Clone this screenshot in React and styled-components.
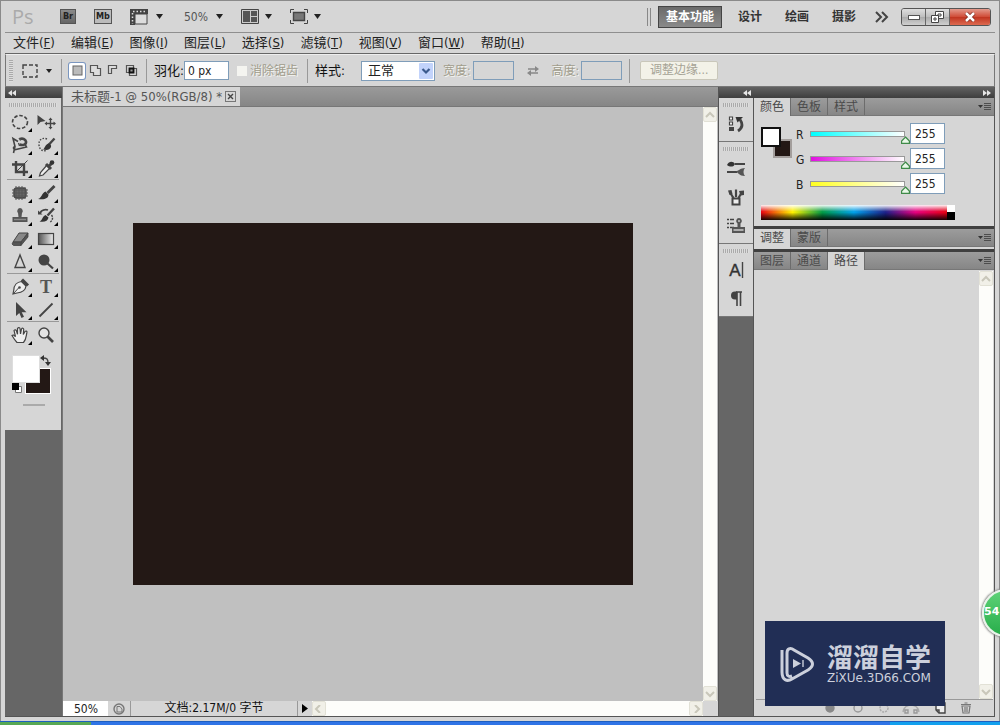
import React, { useState } from 'react';
import styled, { createGlobalStyle, css } from 'styled-components';

const GlobalStyle = createGlobalStyle`
  * {
    box-sizing: border-box;
  }
  body {
    margin: 0;
    overflow: hidden;
    font-family: "DejaVu Sans Condensed", "Open Sans", "Noto Sans CJK SC", sans-serif;
    font-size: 12px;
    color: #222;
  }
  button, input, select {
    font: inherit;
    color: inherit;
    margin: 0;
    padding: 0;
  }
  button {
    border: 0;
    background: none;
  }
`
const Desktop = styled.div`
  position: relative;
  display: flex;
  flex-direction: column;
  height: 100vh;
  overflow: hidden;
  background: #d6d6d6;
`
const Frame = styled.div`
  display: flex;
  flex-direction: column;
  flex: 1;
  min-height: 0;
  padding: 0 4px 4px;
  border: 1px solid #8a8a8a;
  border-bottom: 0;
`
const Taskbar = styled.div`
  height: 4px;
  background: linear-gradient(90deg, #57a854 0 91px, #2f74e6 91px 89%, #12a0ee 89%);
  border-top: 1px solid #1e5fc0;
`

/* top bars */
const AppBar = styled.header`
  display: flex;
  align-items: center;
  height: 32px;
  padding: 0 4px 0 7px;
  border-bottom: 1px solid #8f8f8f;
`
const AppTools = styled.div`
  display: flex;
  align-items: center;
  gap: 18px;
  flex: 1;
`
const Logo = styled.span`
  width: 30px;
  font-family: "Open Sans", sans-serif;
  font-size: 20px;
  line-height: 24px;
  color: #aaa;
`
const Tile = styled.button`
  width: ${props => props.$folder ? '18px' : '16px'};
  height: 15px;
  border: 1px solid #555;
  background: ${props => props.$folder ? '#bbb' : 'linear-gradient(#8a8a8a, #666)'};
  font-size: 9px;
  font-weight: bold;
  line-height: 13px;
  text-align: center;
  color: #222;
`
const DropButton = styled.button`
  display: flex;
  align-items: center;
  gap: ${props => props.$wide ? '8px' : '6px'};
  min-width: ${props => props.$pad ? '36px' : '0'};
  color: #555;
  svg { display: block; }
`
const Workspaces = styled.nav`
  display: flex;
  align-items: center;
  gap: 23px;
`
const DoubleLine = styled.span`
  width: 4px;
  height: 18px;
  margin-right: -16px;
  border: 1px solid #888;
  border-width: 0 1px;
`
const Workspace = styled.button`
  height: 22px;
  margin-left: ${props => props.$more ? '-4px' : '0'};
  font-weight: bold;
  line-height: 20px;
  color: #333;
  svg { display: block; }
  ${props => props.$active && css`
    padding: 0 7px;
    margin-right: -7px;
    border: 1px solid #444;
    background: linear-gradient(#6a6a6a, #8a8a8a);
    color: #fff;
  `}
`
const WindowButtons = styled.div`
  display: flex;
  height: 18px;
  margin-left: 12px;
  border: 1px solid #555;
  border-radius: 3px;
  overflow: hidden;
`
const WindowButton = styled.button`
  display: flex;
  align-items: center;
  justify-content: center;
  width: ${props => props.$close ? '40px' : '24px'};
  border-right: ${props => props.$close ? '0' : '1px solid #666'};
  background: ${props => props.$close
    ? 'linear-gradient(#e39a8c, #cf4a35 50%, #c03520 51%, #dd6a50)'
    : 'linear-gradient(#dedede, #bdbdbd 50%, #aaa 51%, #cfcfcf)'};
`
const MenuBar = styled.nav`
  display: flex;
  align-items: center;
  gap: 16px;
  height: 21px;
  padding: 0 8px;
  border-bottom: 1px solid #666;
`
const MenuItem = styled.button`
  font-size: 13px;
  line-height: 18px;
  white-space: nowrap;
`
const OptionsBar = styled.form`
  display: flex;
  align-items: center;
  height: 33px;
  padding: 0 3px;
  border: 1px solid #777;
  border-top-color: #eee;
`
const Grip = styled.span`
  flex: none;
  width: ${props => props.$vertical ? '4px' : 'auto'};
  height: ${props => props.$vertical ? '22px' : '4px'};
  margin: ${props => props.$vertical ? '0' : '5px 4px 2px'};
  background: ${props => props.$vertical
    ? 'repeating-linear-gradient(#aaa 0 1px, #ddd 1px 2px)'
    : 'repeating-linear-gradient(90deg, #aaa 0 1px, #ddd 1px 2px)'};
`
const Divider = styled.span`
  flex: none;
  width: 1px;
  height: 24px;
  margin: 0 7px;
  background: #999;
`
const Preset = styled.button`
  display: flex;
  align-items: center;
  gap: 8px;
  margin: 0 2px 0 9px;
  svg { display: block; }
`
const Modes = styled.div`
  display: flex;
  gap: 2px;
`
const Mode = styled.button`
  display: flex;
  align-items: center;
  justify-content: center;
  width: 16px;
  height: 16px;
  border-radius: 2px;
  ${props => props.$active && css`
    background: #fff;
    box-shadow: 0 0 0 1px #7a96c0;
  `}
`
const Label = styled.label`
  flex: none;
  font-size: ${props => props.$disabled ? '12px' : '13px'};
  line-height: 18px;
  color: ${props => props.$disabled ? '#a09c8c' : '#111'};
  text-shadow: ${props => props.$disabled ? '1px 1px 0 #f4f4f0' : 'none'};
`
const Field = styled.input`
  width: ${props => props.$width}px;
  height: 19px;
  padding: 0 3px;
  border: 1px solid #7f9db9;
  border-radius: 0;
  background: #fff;
  &:disabled { background: #d6d6d6; }
`
const Check = styled.input`
  appearance: none;
  width: 10px;
  height: 10px;
  margin: 0 3px 0 8px;
  background: #f4f4f0;
`
const SelectBox = styled.span`
  position: relative;
  width: 74px;
  height: 20px;
  margin: 0 8px 0 16px;
  select {
    appearance: none;
    width: 100%;
    height: 100%;
    padding: 0 6px;
    border: 1px solid #7f9db9;
    border-radius: 0;
    background: #fff;
    font-size: 13px;
    line-height: 18px;
  }
  svg {
    position: absolute;
    top: 2px;
    right: 2px;
    pointer-events: none;
  }
`
const Spacer = styled.span`
  width: ${props => props.$w}px;
`
const RefineButton = styled.button`
  width: 78px;
  height: 19px;
  margin-left: 3px;
  border: 1px solid #c9c7ba;
  border-radius: 2px;
  background: #f3f2e8;
  line-height: 17px;
  color: #a5a295;
`

/* main area */
const Main = styled.main`
  display: flex;
  flex: 1;
  min-height: 0;
  border-bottom: 1px solid #555;
`
const Column = styled.div`
  display: flex;
  flex-direction: column;
  flex: ${props => props.$width ? 'none' : '1'};
  width: ${props => props.$width ? props.$width + 'px' : 'auto'};
  min-width: 0;
  background: #666;
`
const DarkBar = styled.div`
  display: flex;
  flex: none;
  align-items: center;
  height: 11px;
  padding: 0 3px;
  background: linear-gradient(#626262, #3e3e3e);
`
const Tools = styled.div`
  display: flex;
  flex-direction: column;
  height: 332px;
  margin-right: 1px;
  background: #d6d6d6;
`
const ToolGroup = styled.div`
  display: grid;
  grid-template-columns: 26px 26px;
  grid-auto-rows: 23px;
  margin: 0 2px;
  padding: 1px 0 0;
  border-bottom: ${props => props.$last ? '0' : '1px solid #999'};
`
const Tool = styled.button`
  position: relative;
  display: flex;
  align-items: center;
  justify-content: center;
  svg { display: block; }
  ${props => props.$more && css`
    &::after {
      content: '';
      position: absolute;
      right: 1px;
      bottom: 1px;
      width: 4px;
      height: 4px;
      background: #000;
      clip-path: polygon(100% 0, 100% 100%, 0 100%);
    }
  `}
`
const Swatches = styled.div`
  display: grid;
  grid-template-columns: 13px 15px 11px;
  grid-template-rows: 13px 15px 11px;
  margin: 9px 0 0 7px;
`
const Swatch = styled.button`
  grid-area: ${props => props.$back ? '2 / 2 / 4 / 4' : '1 / 1 / 3 / 3'};
  z-index: ${props => props.$back ? 0 : 1};
  border: 1px solid ${props => props.$back ? '#fff' : '#ddd'};
  background: ${props => props.$back ? '#231815' : '#fff'};
`
const SwatchIcon = styled.button`
  display: flex;
  grid-area: ${props => props.$area};
`
const Handle = styled.span`
  width: 22px;
  height: 2px;
  margin: 10px auto 0 18px;
  background: #aaa;
`

const Doc = styled.section`
  display: flex;
  flex-direction: column;
  flex: 1;
  min-width: 0;
  border-left: 1px solid #777;
  background: #c0c0c0;
`
const DocTabs = styled.div`
  display: flex;
  flex: none;
  height: 20px;
  border-bottom: 1px solid #777;
  background: linear-gradient(#9a9a9a, #868686);
`
const DocTab = styled.div`
  display: flex;
  align-items: center;
  gap: 3px;
  padding: 0 4px 0 8px;
  background: #d6d6d6;
  font-size: 13px;
  line-height: 19px;
  color: #555;
`
const CloseTab = styled.button`
  display: flex;
  align-items: center;
  justify-content: center;
  width: 11px;
  height: 11px;
  border: 1px solid #777;
`
const DocBody = styled.div`
  display: grid;
  grid-template-columns: 1fr 15px;
  flex: 1;
  min-height: 0;
`
const Canvas = styled.div`
  display: flex;
  align-items: center;
  justify-content: center;
  overflow: hidden;
`
const Artboard = styled.div`
  width: 500px;
  height: 362px;
  background: #231815;
`
const ScrollBar = styled.div`
  display: flex;
  flex-direction: ${props => props.$row ? 'row' : 'column'};
  justify-content: space-between;
  flex: ${props => props.$row ? '1' : 'none'};
  width: ${props => props.$row ? 'auto' : '14px'};
  background: #fdfdfa;
`
const ScrollButton = styled.button`
  display: flex;
  align-items: center;
  justify-content: center;
  width: 14px;
  height: 15px;
  border: 1px solid #e2e1d6;
  border-radius: 2px;
  background: #f1f0e8;
`
const StatusBar = styled.footer`
  display: flex;
  flex: none;
  align-items: center;
  height: 15px;
  padding-right: 15px;
  background: #d6d6d6;
`
const Zoom = styled.input`
  width: 45px;
  height: 15px;
  padding: 0 0 0 11px;
  border: 0;
  background: #fff;
`
const StatusInfo = styled.span`
  width: 168px;
  height: 15px;
  border: 1px solid #999;
  border-width: 0 1px;
  line-height: 15px;
  text-align: center;
  color: #111;
`
const StatusButton = styled.button`
  display: flex;
  align-items: center;
  justify-content: center;
  width: ${props => props.$narrow ? '14px' : '22px'};
  height: 15px;
`

/* right side */
const Side = styled.aside`
  display: flex;
  flex-direction: column;
  flex: none;
  width: 277px;
  border: 1px solid #555;
  border-width: 0 1px;
`
const SideHead = styled.div`
  display: flex;
  flex: none;
  justify-content: space-between;
  align-items: center;
  height: 11px;
  padding: 0 3px 0 24px;
  background: linear-gradient(#626262, #3e3e3e);
`
const SideBody = styled.div`
  display: flex;
  flex: 1;
  min-height: 0;
`
const DockGroup = styled.div`
  display: flex;
  flex-direction: column;
  padding-bottom: 3px;
  border-bottom: 1px solid #777;
  background: #d6d6d6;
`
const DockButton = styled.button`
  display: flex;
  align-items: center;
  justify-content: center;
  height: 29px;
`
const Panels = styled.div`
  display: flex;
  flex-direction: column;
  flex: 1;
  min-width: 0;
  border-left: 1px solid #555;
  background: #d6d6d6;
`
const Tabs = styled.div`
  display: flex;
  flex: none;
  align-items: stretch;
  height: 18px;
  border-bottom: 1px solid #777;
  background: linear-gradient(#9c9c9c, #868686);
`
const Tab = styled.button`
  width: 37px;
  border-right: 1px solid #6c6c6c;
  line-height: 16px;
  color: #4a4a4a;
  ${props => props.$active && css`
    margin-bottom: -1px;
    background: #d6d6d6;
  `}
`
const TabMenu = styled.button`
  display: flex;
  align-items: center;
  margin-left: auto;
  padding-right: 3px;
`
const Gap = styled.div`
  flex: none;
  height: ${props => props.$light ? '5px' : '3px'};
  border-top: ${props => props.$light ? '2px solid #d6d6d6' : '0'};
  background: #3f3f3f;
`
const ColorPanel = styled.div`
  flex: none;
  height: 110px;
  padding: 7px 7px 0;
`
const ColorTop = styled.div`
  display: flex;
  gap: 4px;
  height: 82px;
`
const ColorSwatches = styled.div`
  display: grid;
  grid-template-columns: 12px 8px 11px;
  grid-template-rows: 12px 8px 11px;
  margin-top: 4px;
`
const ColorSwatch = styled.button`
  grid-area: ${props => props.$back ? '2 / 2 / 4 / 4' : '1 / 1 / 3 / 3'};
  z-index: ${props => props.$back ? 0 : 1};
  border: ${props => props.$back ? '2px solid #a39e9c' : '2px solid #111'};
  background: ${props => props.$back ? '#231815' : '#fff'};
`
const Channels = styled.div`
  display: flex;
  flex-direction: column;
  gap: 4px;
`
const Channel = styled.div`
  display: flex;
  align-items: center;
  height: 21px;
  label {
    width: 10px;
    padding-top: 3px;
    font-size: 12px;
    line-height: 18px;
  }
`
const thumb = encodeURIComponent('<svg xmlns="http://www.w3.org/2000/svg" width="9" height="8"><path d="M4.5 1L8.400 5v2.400H.600V5z" fill="#e9f8e8" stroke="#3f8a48" stroke-width="1.2"/></svg>')
const Range = styled.input`
  appearance: none;
  width: 104px;
  height: 21px;
  background:
    linear-gradient(90deg, ${props => props.$from}, #fff) 5px 9px / calc(100% - 11px) 4px no-repeat,
    linear-gradient(#999, #999) 4px 8px / calc(100% - 9px) 6px no-repeat;
  &::-webkit-slider-runnable-track {
    height: 21px;
  }
  &::-webkit-slider-thumb {
    appearance: none;
    width: 9px;
    height: 8px;
    margin-top: 13px;
    background: url("data:image/svg+xml,${thumb}") no-repeat;
  }
`
const ChannelValue = styled.input`
  width: 35px;
  height: 21px;
  padding: 0 4px;
  border: 1px solid #7f9db9;
  background: #fff;
`
const Spectrum = styled.div`
  display: grid;
  grid-template-columns: 1fr 8px;
  width: 194px;
  height: 15px;
`
const Rainbow = styled.span`
  background:
    linear-gradient(rgba(255, 255, 255, 0.95), rgba(255, 255, 255, 0) 45%, rgba(0, 0, 0, 0) 50%, rgba(0, 0, 0, 0.9)),
    linear-gradient(90deg, #e60012, #fff100 17%, #009944 33%, #00a0e9 50%, #1d2088 67%, #e4007f 83%, #e60012);
`
const Ends = styled.span`
  background: linear-gradient(#fff 50%, #000 50%);
`
const PathPanel = styled.div`
  display: flex;
  justify-content: flex-end;
  flex: 1;
  min-height: 0;
  margin: 1px 1px 0 2px;
  border-bottom: 1px solid #999;
`
const PanelFoot = styled.div`
  display: flex;
  flex: none;
  align-items: center;
  justify-content: flex-end;
  gap: 12px;
  height: 16px;
  padding-right: 22px;
  button { display: flex; }
`

/* things on top of the window */
const Watermark = styled.div`
  position: absolute;
  right: 55px;
  bottom: 19px;
  z-index: 2;
  display: flex;
  align-items: center;
  gap: 12px;
  width: 180px;
  height: 85px;
  padding-left: 14px;
  background: #212e55;
  color: #ccd0dc;
`
const Brand = styled.div`
  font-size: 26px;
  font-weight: bold;
  line-height: 28px;
`
const BrandUrl = styled.div`
  font-family: "DejaVu Sans", sans-serif;
  font-size: 12px;
  line-height: 12px;
`
const Badge = styled.div`
  position: absolute;
  right: -30px;
  bottom: 88px;
  z-index: 2;
  width: 48px;
  height: 48px;
  border: 2px solid #e9f3ea;
  border-radius: 50%;
  background: linear-gradient(#5ed277, #28ad4b);
  box-shadow: 0 0 2px 1px #888;
  font-family: "DejaVu Sans", sans-serif;
  font-size: 11px;
  font-weight: bold;
  line-height: 42px;
  color: #fff;
`

const Svg = ({ w = 20, h = 20, children }) => (
  <svg width={w} height={h} viewBox={`0 0 ${w} ${h}`} fill="none" stroke="#444" strokeWidth="1.4" aria-hidden="true">
    {children}
  </svg>
)
const Caret = () => <Svg w={7} h={5}><path d="M0 0h7L3.500 5z" fill="#222" stroke="none" /></Svg>
const SmallCaret = () => <Svg w={6} h={4}><path d="M0 0h6L3 4z" fill="#222" stroke="none" /></Svg>
const Arrows = ({ right }) => (
  <Svg w={8} h={6}>
    <path d={right ? 'M0 0v6l4-3zM4 0v6l4-3z' : 'M4 0v6L0 3zM8 0v6L4 3z'} fill="#e6e6e6" stroke="none" />
  </Svg>
)
const Chevron = ({ dir }) => {
  const paths = { up: 'M1 6l4-4 4 4', down: 'M1 2l4 4 4-4', left: 'M6 0L2 4l4 4', right: 'M4 0l4 4-4 4' }
  return <Svg w={10} h={8}><path d={paths[dir]} stroke="#c9c7ba" strokeWidth="2" /></Svg>
}
const MenuLines = () => (
  <Svg w={13} h={9}>
    <path d="M0 3h5L2.500 6z" fill="#333" stroke="none" />
    <path d="M6 1.500h7M6 3.500h7M6 5.500h7M6 7.500h7" stroke="#4d4d4d" strokeWidth="1" />
  </Svg>
)

const toolGroups = [
  [
    ['椭圆选框', true, <ellipse cx="10" cy="10" rx="7.5" ry="6.5" strokeWidth="1.600" strokeDasharray="3.5 1.8" />],
    ['移动', false, <>
      <path d="M1.500 3v10l3-3 5-1z" fill="#444" stroke="none" />
      <path d="M14.500 7v9M10 11.500h9" />
      <path d="M14.500 5.500l2 2.500h-4zM14.500 17.500l2-2.500h-4zM8.500 11.500l2.500-2v4zM20 11.500l-2.500-2v4z" fill="#444" stroke="none" />
    </>],
    ['磁性套索', true, <>
      <path d="M8 6.500L3 3.500l2 8L3.500 18M5 11.500c-2.500 1-1.500 3.500 1 3L16.500 12l-1.500-3" strokeWidth="1.600" />
      <path d="M9.500 9.500c3.500 1.200 7 0 6.500-3C15.500 4 12.500 3 10 4" strokeWidth="2.600" />
      <path d="M9 3l1.500 2.500M8.500 8l1 3" strokeWidth="1.200" />
    </>],
    ['快速选择', true, <>
      <path d="M11 4C6 2 2.500 5 3 10c.3 4 3 6.500 7 5.500" strokeDasharray="1.500 1.500" />
      <path d="M18.500 3.500l-6 6.500" strokeWidth="2.400" />
      <path d="M12.500 8.500c2 .3 3 2 2.500 3.500-1.200 3-4 3.500-8 2.500 2-1.200 2-5 5.500-6z" fill="#333" stroke="none" />
    </>],
    ['裁剪', true, <>
      <path d="M6 3v11h12M2 6.500h12V18" strokeWidth="2.400" />
      <path d="M17.500 2.500L7 13" strokeWidth="1" />
    </>],
    ['吸管', true, <>
      <path d="M11 7l3 3-7 7-3.500 1 1-3.500z" fill="#eee" strokeWidth="1.200" />
      <path d="M10 6l5 5M13 8l3-3" strokeWidth="3" />
      <circle cx="16" cy="4.500" r="2.300" fill="#333" stroke="none" />
    </>],
  ],
  [
    ['修补', true, <>
      <rect x="4" y="5" width="12" height="10" rx="3" fill="#666" stroke="#444" />
      <path d="M6 3v14M9 3v14M12 3v14M15 4v12M2 7h16M2 10h16M2 13h16" stroke="#555" strokeWidth="1" />
    </>],
    ['画笔', true, <>
      <path d="M18.500 3l-7 7" strokeWidth="2.800" />
      <path d="M9.500 8.500l3 3c0 4-4 5.500-10.500 4.500 4-1 3.500-6 7.500-7.500z" fill="#333" stroke="none" />
    </>],
    ['仿制图章', true, <>
      <path d="M10 2a3 3 0 0 1 2 5l-.5 4h6v5h-15v-5h6L8 7a3 3 0 0 1 2-5z" fill="#555" stroke="none" />
      <path d="M4 13.500h12" stroke="#888" />
    </>],
    ['历史记录画笔', true, <>
      <path d="M18 2.500l-6.500 7" strokeWidth="2.400" />
      <path d="M9.500 9l3 2.500c-.5 3.500-4 5-9 4 3-1 2.500-5 6-6.500z" fill="#333" stroke="none" />
      <path d="M4 7c1.500-3 5-4 8-3" strokeWidth="1.800" />
      <path d="M2 4.500v4h4.500z" fill="#444" stroke="none" />
      <path d="M15.500 9c2 2.500 1 6-2 7.500" strokeDasharray="2 1" />
    </>],
    ['橡皮擦', true, <>
      <path d="M9 4h9l-7 9H3z" fill="#888" strokeWidth="1" />
      <path d="M3 13h8v3.500H3.500L2 15zM11 13l7-9v4l-7 8.500z" fill="#555" stroke="#444" strokeWidth=".8" />
    </>],
    ['渐变', true, <>
      <defs>
        <linearGradient id="grad"><stop stopColor="#555" /><stop offset="1" stopColor="#eee" /></linearGradient>
      </defs>
      <rect x="2.500" y="4.500" width="15" height="11" fill="url(#grad)" strokeWidth="1.200" />
    </>],
    ['锐化', true, <path d="M10 3L5 15.500h10z" fill="#d6d6d6" />],
    ['减淡', true, <>
      <circle cx="8" cy="8" r="5.500" fill="#444" stroke="none" />
      <path d="M11.500 11.500l5.500 5" strokeWidth="2.200" />
    </>],
  ],
  [
    ['钢笔', true, <>
      <path d="M11.500 4.500l4.500 4.500c-.5 4-4 6.500-9 7l-4 1 .8-4C4 8.500 7 5 11.500 4.500z" fill="#eee" strokeWidth="1.200" />
      <path d="M3.500 16.500l5.500-6" strokeWidth="1" />
      <circle cx="9.500" cy="10.500" r="1.300" fill="#444" stroke="none" />
      <path d="M12 2.500l6 6" strokeWidth="3" />
    </>],
    ['文字', true, <text x="10" y="16" textAnchor="middle" fontFamily="Liberation Serif, serif" fontSize="18" fontWeight="bold" fill="#555" stroke="none">T</text>],
    ['路径选择', true, <path d="M6 2v14l3.300-3 2.200 5 2.500-1.200-2.300-4.600h4.800z" fill="#444" stroke="none" />],
    ['直线', true, <path d="M3.500 16.500l13-13" strokeWidth="1.800" />],
  ],
  [
    ['抓手', true, <path d="M7 17.500c-2-2-3.500-4.500-5-7 1-1 2.200-.5 3.500 1.200L4 5.500c1-1.300 2-.7 2.500.5l1 3.200L7.500 3.500c.8-1.300 2.300-1 2.500 0l.5 5.500 1-5c.8-1.300 2.300-.8 2.200.5L13.300 9.500l1.700-3c1-1 2.200-.3 1.900 1C16 11 16.500 14 13.500 17.500z" fill="#eee" strokeWidth="1.200" />],
    ['缩放', false, <>
      <circle cx="8" cy="8" r="5" fill="#e4e4e4" />
      <path d="M11.500 11.500l5.500 5.500" strokeWidth="2.600" />
    </>],
  ],
]

const dockGroups = [
  [['历史记录', <>
    <path d="M3.500 3h3v3h-3zM3.500 8h3v3h-3z" fill="#fff" strokeWidth="1.200" />
    <path d="M3 13h5v4H3z" fill="#444" stroke="none" />
    <path d="M12 17c4.500-3 5-7 2-11.500" strokeWidth="2.800" />
    <path d="M9.500 3h7.500l-5.500 5.500z" fill="#333" stroke="none" />
  </>]],
  [
    ['画笔', <>
      <path d="M9 6h10M1 14h10" strokeWidth="1.800" />
      <path d="M1 7c2-4 6-4 8-1-1 3-5 3.500-8 1z" fill="#333" stroke="none" />
      <path d="M10 13.500l3-1.500c2-2 4-1.500 6-2-2 2-2 6 0 8-3 0-5-1-6-2z" fill="#555" stroke="none" />
    </>],
    ['画笔预设', <>
      <path d="M6.500 11.500h7v6h-7z" fill="#eee" strokeWidth="2" />
      <path d="M7.500 11L4 5.500M10 10V2.500M12.500 11l3.500-6" strokeWidth="2.200" />
      <path d="M13 4l5-.5V8l-3.500.5zM2 3.500l3.500-.5 1 4-3 1z" fill="#444" stroke="none" />
    </>],
    ['仿制源', <>
      <path d="M1 3.500h2M1 7.500h2M1 11.500h2M4 3.500h4M4 7.500h4M4 11.500h4" />
      <path d="M13 2a3 3 0 0 1 1.500 5.500V11H19v6H6v-6h5.500V7.500A3 3 0 0 1 13 2z" fill="#555" stroke="none" />
      <path d="M7.500 14h10M13 4v2" stroke="#ccc" />
    </>],
  ],
  [
    ['字符', <>
      <text x="9" y="16" textAnchor="middle" fontFamily="Liberation Sans, sans-serif" fontSize="17" fill="#333" stroke="#333" strokeWidth=".4">A</text>
      <path d="M16.500 2v16" />
    </>],
    ['段落', <>
      <path d="M10 3h6M11 3v14M14.500 3v14" strokeWidth="1.600" />
      <path d="M11 2.500v8H9a4 4 0 0 1 0-8z" fill="#444" stroke="none" />
    </>],
  ],
]

const menus = [
  ['文件', 'F'], ['编辑', 'E'], ['图像', 'I'], ['图层', 'L'], ['选择', 'S'],
  ['滤镜', 'T'], ['视图', 'V'], ['窗口', 'W'], ['帮助', 'H'],
]

const channels = [['R', '#00ffff'], ['G', '#e010e0'], ['B', '#ffff20']]

const modes = [
  ['新选区', <rect x="2" y="2" width="9" height="9" fill="#bbb" stroke="#666" strokeWidth="1" />],
  ['添加到选区', <path d="M1.500 1.500h7v3h3v7h-7v-3h-3z" fill="#ddd" stroke="#555" strokeWidth="1.200" />],
  ['从选区减去', <path d="M1.500 9.500v-8h8v3h-5v5z" fill="#ddd" stroke="#555" strokeWidth="1.200" />],
  ['与选区交叉', <><path d="M1.500 1.500h7v7h-7zM4.500 4.500h7v7h-7z" stroke="#555" strokeWidth="1.200" /><path d="M4.500 4.500h4v4h-4z" fill="#999" stroke="#111" strokeWidth="1.800" /></>],
]

const TopBar = () => (
  <AppBar>
    <AppTools>
      <Logo>Ps</Logo>
      <Tile>Br</Tile>
      <Tile $folder>Mb</Tile>
      <DropButton $wide $pad aria-label="查看额外内容">
        <Svg w={18} h={16}>
          <path d="M0 0h18v5H5v11H0z" fill="#444" stroke="none" />
          <path d="M5 5h12v10H5z" fill="#ddd" strokeWidth="1" />
          <path d="M3 2.500h14M2.500 4v11" stroke="#ddd" strokeWidth="1.500" strokeDasharray="1.500 2" />
        </Svg>
        <Caret />
      </DropButton>
      <DropButton $wide>50% <Caret /></DropButton>
      <DropButton aria-label="排列文档">
        <Svg w={18} h={15}>
          <path d="M.5.500h17v14H.500z" fill="#ccc" strokeWidth="1" />
          <path d="M2 2h7v11H2zM10 2h6v5h-6zM10 8h6v5h-6z" fill="#555" stroke="none" />
        </Svg>
        <Caret />
      </DropButton>
      <DropButton aria-label="屏幕模式">
        <Svg w={18} h={15}>
          <path d="M.5 4V.500H4M14 .5h3.500V4M17.500 11v3.500H14M4 14.500H.500V11" strokeWidth="1" />
          <path d="M3.500 3.500h11v8h-11z" fill="#777" />
        </Svg>
        <Caret />
      </DropButton>
    </AppTools>
    <Workspaces>
      <DoubleLine />
      <Workspace $active>基本功能</Workspace>
      <Workspace>设计</Workspace>
      <Workspace>绘画</Workspace>
      <Workspace>摄影</Workspace>
      <Workspace $more aria-label="更多">
        <Svg w={14} h={12}><path d="M1 1l5 5-5 5M7 1l5 5-5 5" strokeWidth="2" /></Svg>
      </Workspace>
    </Workspaces>
    <WindowButtons>
      <WindowButton aria-label="最小化">
        <Svg w={12} h={6}><rect x=".5" y="1.500" width="11" height="4" fill="#fff" stroke="#555" strokeWidth="1" /></Svg>
      </WindowButton>
      <WindowButton aria-label="还原">
        <Svg w={13} h={12}>
          <path d="M4.500.500h8v7h-8z" fill="#fff" strokeWidth="1" /><path d="M7 3h3v2H7z" strokeWidth="1" />
          <path d="M.5 4.500h7v7h-7z" fill="#fff" strokeWidth="1" /><path d="M3 7h2v2H3z" strokeWidth="1" />
        </Svg>
      </WindowButton>
      <WindowButton $close aria-label="关闭">
        <Svg w={12} h={10}><path d="M2 1l8 8M10 1L2 9" stroke="#7d2a1c" strokeWidth="4" /><path d="M2 1l8 8M10 1L2 9" stroke="#fff" strokeWidth="2.500" /></Svg>
      </WindowButton>
    </WindowButtons>
  </AppBar>
)

const Options = () => (
  <OptionsBar onSubmit={e => e.preventDefault()}>
    <Grip $vertical />
    <Preset type="button" aria-label="工具预设">
      <Svg w={16} h={14}><rect x="1" y="1" width="14" height="12" strokeDasharray="4 2" /></Svg>
      <SmallCaret />
    </Preset>
    <Divider />
    <Modes>
      {modes.map(([name, icon], i) => (
        <Mode key={name} type="button" $active={i === 0} aria-label={name}><Svg w={13} h={13}>{icon}</Svg></Mode>
      ))}
    </Modes>
    <Divider />
    <Label htmlFor="feather">羽化:</Label>
    <Field id="feather" $width={45} defaultValue="0 px" />
    <Check type="checkbox" id="alias" disabled />
    <Label htmlFor="alias" $disabled>消除锯齿</Label>
    <Spacer $w={2} />
    <Divider />
    <Label htmlFor="style">样式:</Label>
    <SelectBox>
      <select id="style" defaultValue="正常">
        <option>正常</option>
        <option>固定比例</option>
        <option>固定大小</option>
      </select>
      <Svg w={14} h={16}>
        <rect width="14" height="16" rx="1" fill="#c2d3fb" stroke="none" />
        <path d="M3.500 6l3.500 3.500L10.500 6" stroke="#3b5a8c" strokeWidth="2.200" />
      </Svg>
    </SelectBox>
    <Label htmlFor="width" $disabled>宽度:</Label>
    <Spacer $w={2} />
    <Field id="width" $width={41} disabled />
    <Spacer $w={13} />
    <Svg w={12} h={10}>
      <path d="M1 3h8M3 7h8" stroke="#888" />
      <path d="M8 0v6l4-3zM4 4v6L0 7z" fill="#888" stroke="none" />
    </Svg>
    <Spacer $w={13} />
    <Label htmlFor="height" $disabled>高度:</Label>
    <Spacer $w={2} />
    <Field id="height" $width={41} disabled />
    <Divider />
    <RefineButton type="button" disabled>调整边缘...</RefineButton>
  </OptionsBar>
)

const Toolbox = () => (
  <Column $width={57}>
    <DarkBar><Arrows /></DarkBar>
    <Tools>
      <Grip />
      {toolGroups.map((group, i) => (
        <ToolGroup key={i} $last={i === toolGroups.length - 1}>
          {group.map(([name, more, icon]) => (
            <Tool key={name} $more={more} aria-label={name}><Svg>{icon}</Svg></Tool>
          ))}
        </ToolGroup>
      ))}
      <Swatches>
        <Swatch aria-label="前景色" />
        <Swatch $back aria-label="背景色" />
        <SwatchIcon $area="1 / 3 / 2 / 4" aria-label="切换颜色">
          <Svg w={11} h={11}>
            <path d="M3 3c4 0 5 1 5 5" />
            <path d="M4 0v6L0 3zM5 7h6l-3 4z" fill="#333" stroke="none" />
          </Svg>
        </SwatchIcon>
        <SwatchIcon $area="3 / 1 / 4 / 2" aria-label="默认颜色">
          <Svg w={10} h={10}>
            <path d="M3.500 3.500h6v6h-6z" fill="#fff" stroke="#777" strokeWidth="1" />
            <path d="M0 0h7v7H0z" fill="#000" stroke="none" />
          </Svg>
        </SwatchIcon>
      </Swatches>
      <Handle />
    </Tools>
  </Column>
)

const DocumentArea = () => (
  <Doc>
    <DocTabs>
      <DocTab>
        未标题-1 @ 50%(RGB/8) *
        <CloseTab aria-label="关闭文档">
          <Svg w={7} h={7}><path d="M1 1l5 5M6 1L1 6" /></Svg>
        </CloseTab>
      </DocTab>
    </DocTabs>
    <DocBody>
      <Canvas><Artboard /></Canvas>
      <ScrollBar>
        <ScrollButton aria-label="向上"><Chevron dir="up" /></ScrollButton>
        <ScrollButton aria-label="向下"><Chevron dir="down" /></ScrollButton>
      </ScrollBar>
    </DocBody>
    <StatusBar>
      <Zoom defaultValue="50%" aria-label="缩放比例" />
      <StatusButton aria-label="文档状态">
        <Svg w={12} h={12}><circle cx="6" cy="6" r="5" stroke="#777" /><path d="M4 9V3.500h3L9 6v3z" stroke="#777" strokeWidth="1" /></Svg>
      </StatusButton>
      <StatusInfo>文档:2.17M/0 字节</StatusInfo>
      <StatusButton $narrow aria-label="状态菜单">
        <Svg w={6} h={9}><path d="M0 0v9l6-4.500z" fill="#000" stroke="none" /></Svg>
      </StatusButton>
      <ScrollBar $row>
        <ScrollButton aria-label="向左"><Chevron dir="left" /></ScrollButton>
        <ScrollButton aria-label="向右"><Chevron dir="right" /></ScrollButton>
      </ScrollBar>
    </StatusBar>
  </Doc>
)

const PanelTabs = ({ names, active }) => (
  <Tabs>
    {names.map((name, i) => <Tab key={name} $active={i === active}>{name}</Tab>)}
    <TabMenu aria-label="面板菜单"><MenuLines /></TabMenu>
  </Tabs>
)

const ChannelRow = ({ name, color }) => {
  const [value, setValue] = useState(255)
  return (
    <Channel>
      <label htmlFor={'range' + name}>{name}</label>
      <Range type="range" id={'range' + name} min="0" max="255" $from={color} value={value} onChange={e => setValue(e.target.value)} />
      <ChannelValue aria-label={name} value={value} onChange={e => setValue(e.target.value)} />
    </Channel>
  )
}

const SideArea = () => (
  <Side>
    <SideHead><Arrows /><Arrows right /></SideHead>
    <SideBody>
      <Column $width={34}>
        {dockGroups.map((group, i) => (
          <DockGroup key={i}>
            <Grip />
            {group.map(([name, icon]) => <DockButton key={name} aria-label={name}><Svg>{icon}</Svg></DockButton>)}
          </DockGroup>
        ))}
      </Column>
      <Panels>
        <PanelTabs names={['颜色', '色板', '样式']} active={0} />
        <ColorPanel>
          <ColorTop>
            <ColorSwatches>
              <ColorSwatch aria-label="前景色" />
              <ColorSwatch $back aria-label="背景色" />
            </ColorSwatches>
            <Channels>
              {channels.map(([name, color]) => <ChannelRow key={name} name={name} color={color} />)}
            </Channels>
          </ColorTop>
          <Spectrum><Rainbow /><Ends /></Spectrum>
        </ColorPanel>
        <Gap />
        <PanelTabs names={['调整', '蒙版']} active={0} />
        <Gap $light />
        <PanelTabs names={['图层', '通道', '路径']} active={2} />
        <PathPanel>
          <ScrollBar>
            <ScrollButton aria-label="向上"><Chevron dir="up" /></ScrollButton>
            <ScrollButton aria-label="向下"><Chevron dir="down" /></ScrollButton>
          </ScrollBar>
        </PathPanel>
        <PanelFoot>
          <button aria-label="填充路径"><Svg w={16} h={12}><circle cx="8" cy="6" r="4" fill="#888" stroke="#888" /></Svg></button>
          <button aria-label="描边路径"><Svg w={16} h={12}><circle cx="8" cy="6" r="4" stroke="#999" /></Svg></button>
          <button aria-label="载入选区"><Svg w={12} h={12}><circle cx="6" cy="6" r="4" stroke="#aaa" strokeDasharray="2 1" /></Svg></button>
          <button aria-label="建立路径"><Svg w={18} h={12}><path d="M1 10c1-5 4-7 8-7s7 2 8 7" stroke="#aaa" /><path d="M3 8h3v3H3zM12 8h3v3h-3z" stroke="#999" /></Svg></button>
          <button aria-label="新建路径"><Svg w={16} h={12}><path d="M4 1h9v10H7L4 8z" fill="#eee" /><path d="M4 8h3v3" /></Svg></button>
          <button aria-label="删除路径"><Svg w={12} h={12}><path d="M2 4h8l-1 7H3zM1 2.500h10M4.500 1h3M5 5v5M7 5v5" stroke="#777" strokeWidth="1.200" /></Svg></button>
        </PanelFoot>
      </Panels>
    </SideBody>
  </Side>
)

export default () => (
  <Desktop>
    <GlobalStyle />
    <Frame>
      <TopBar />
      <MenuBar>
        {menus.map(([name, letter]) => <MenuItem key={letter}>{name}(<u>{letter}</u>)</MenuItem>)}
      </MenuBar>
      <Options />
      <Main>
        <Toolbox />
        <DocumentArea />
        <SideArea />
      </Main>
    </Frame>
    <Taskbar />
    <Watermark>
      <Svg w={36} h={40}>
        <path d="M3 6v22c0 8 5 10 10 7l16-9c6-4 6-8 0-12L15 6c-4-3-7-1-7 3v20c0 3 2 4 5 3" stroke="#ccd0dc" strokeWidth="3" />
        <path d="M14 15v9l8-4.500z" fill="#ccd0dc" stroke="none" />
        <path d="M24 16v7" stroke="#ccd0dc" />
      </Svg>
      <div>
        <Brand>溜溜自学</Brand>
        <BrandUrl>ZiXUe.3D66.COM</BrandUrl>
      </div>
    </Watermark>
    <Badge>54</Badge>
  </Desktop>
)
